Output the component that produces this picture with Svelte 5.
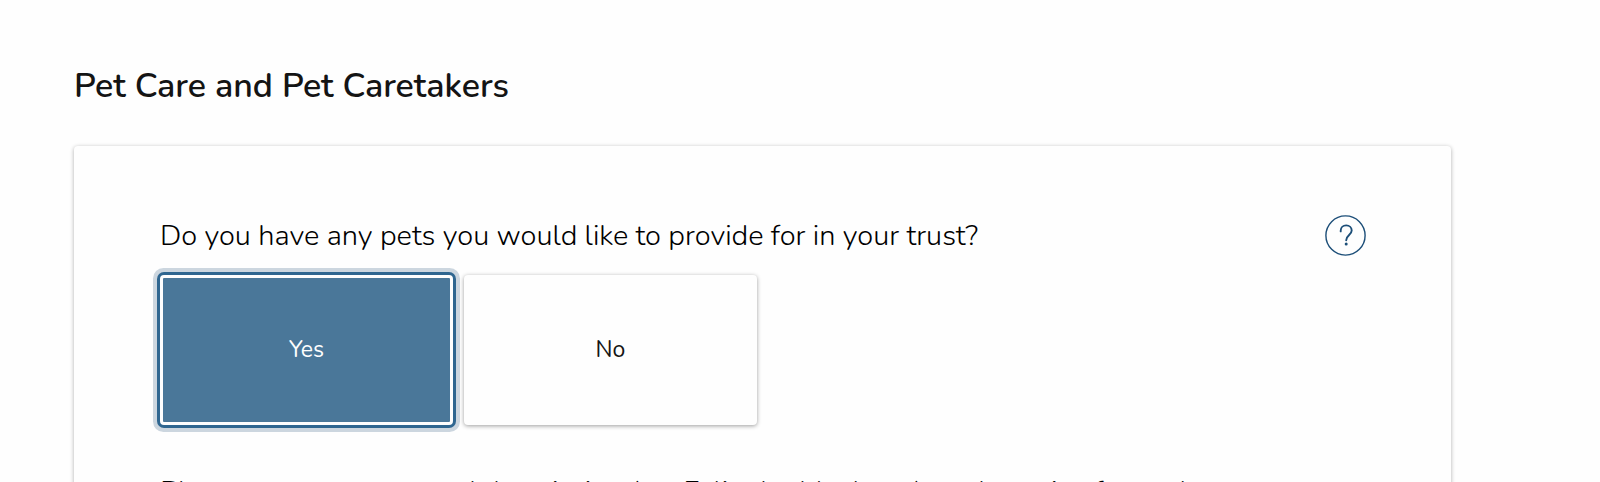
<script lang="ts">
  let options = [
    { label: "Yes", value: true },
    { label: "No", value: false }
  ];
  let hasPets = true;
</script>

<main>
  <h1>Pet Care and Pet Caretakers</h1>
  <section class="card">
    <div class="question">
      <h2 id="pets-question">Do you have any pets you would like to provide for in your trust?</h2>
      <button class="help" type="button" aria-label="Help">
        <svg viewBox="0 0 41 41" width="41" height="41" fill="none" stroke="currentColor">
          <circle cx="20.5" cy="20.5" r="19.6" stroke-width="1.4" />
          <path d="M15.7 16.4V15.8C15.7 12.6 18 10.4 21.2 10.4C24.4 10.4 26.7 12.6 26.7 15.6C26.7 19.8 21.2 20.3 21.2 25.2" stroke-width="1.9" stroke-linecap="round" />
          <circle cx="21.2" cy="28.9" r="1.5" fill="currentColor" stroke="none" />
        </svg>
      </button>
    </div>
    <div class="options" role="group" aria-labelledby="pets-question">
      {#each options as option}
        <button
          class="option"
          class:active={hasPets === option.value}
          type="button"
          aria-pressed={hasPets === option.value}
          on:click={() => (hasPets = option.value)}
        >{option.label}</button>
      {/each}
    </div>
    {#if hasPets}
      <p>Please enter a name and description (ex. Felix the black cat), and species for each</p>
    {/if}
  </section>
</main>

<style>
  :global(body) { background: #fefefe; }
  main { height: 100vh; overflow: hidden; box-sizing: border-box; padding: 62px 149px 0 74px; font-family: Nunito, Lato, sans-serif; color: #141414; }
  h1 { margin: 0 0 36px; font-size: 34px; line-height: 48px; font-weight: 600; }
  .card { background: #fefefe; border-radius: 4px; padding: 69px 85px 69px 86px; box-shadow: 0 1px 4px rgba(0, 0, 0, 0.32); }
  .question { display: flex; align-items: center; justify-content: space-between; gap: 24px; margin-bottom: 19px; }
  h2, p { margin: 0; font-size: 29px; line-height: 40px; font-weight: 300; color: #000; }
  .help { flex: none; display: flex; padding: 0; border: none; background: none; color: #1c4e78; cursor: pointer; }
  .options { display: flex; gap: 11px; margin-bottom: 47px; }
  .option { box-sizing: border-box; width: 293px; height: 150px; border: 3px solid #fefefe; border-radius: 4px; background: #fefefe; color: #141414; font-family: inherit; font-size: 23px; line-height: 32px; box-shadow: 0 1px 4px rgba(0, 0, 0, 0.38); cursor: pointer; }
  .option.active { background: #4a7799; color: #fefefe; box-shadow: 0 0 0 3px #2f6690, 0 0 0 7px #ccd6df; }
</style>
